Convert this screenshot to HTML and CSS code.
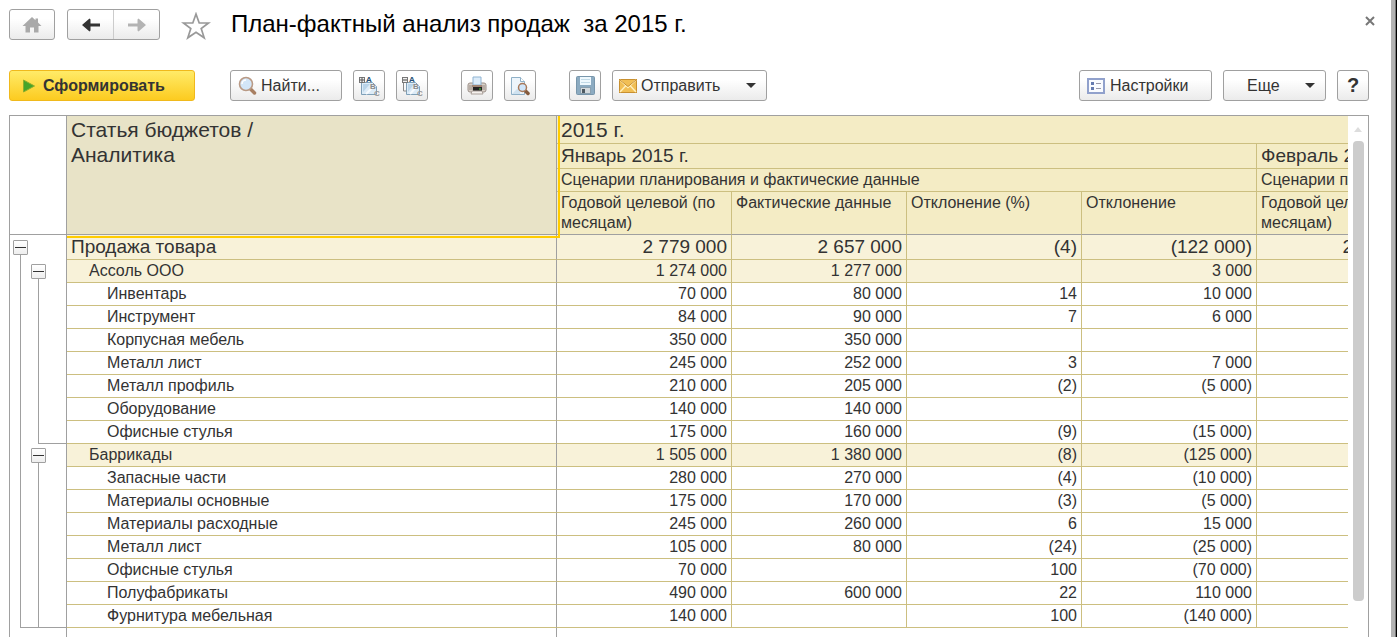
FILE: index.html
```html
<!DOCTYPE html>
<html lang="ru">
<head>
<meta charset="utf-8">
<title>План-фактный анализ продаж за 2015 г.</title>
<link rel="stylesheet" href="styles.css">
</head>
<body>
<div class="window">
  <header class="titlebar">
    <button class="btn home" aria-label="Начальная страница" disabled>
      <svg width="20" height="18" viewBox="0 0 20 18"><path d="M10 1 0.500 10H3.500V16.500H8v-5h4v5h4.500V10H19.500L16 6.600V2.500h-2.500v1.800z" fill="#a9a9a9"/></svg>
    </button>
    <div class="nav">
      <button class="nav-btn" aria-label="Назад"><svg width="18" height="14" viewBox="0 0 18 14"><path d="M0 7 7.500 0.500 8.500 1.500V5.500H18v3H8.500v4l-1 1z" fill="#333"/></svg></button>
      <button class="nav-btn" aria-label="Вперед" disabled><svg width="18" height="14" viewBox="0 0 18 14"><path d="M18 7 10.500 0.500 9.500 1.500V5.500H0v3h9.500v4l1 1z" fill="#b3b3b3"/></svg></button>
    </div>
    <button class="star" aria-label="В избранное"><svg width="30" height="28" viewBox="0 0 30 28"><path d="M15 2 18.200 11H27.500L20.200 16.500 23.200 25.800 15 20.200 6.800 25.800 9.800 16.500 2.500 11H11.800z" fill="#fff" stroke="#999" stroke-width="1.700"/></svg></button>
    <h1>План-фактный анализ продаж&nbsp; за 2015 г.</h1>
    <button class="close" aria-label="Закрыть"><svg width="10" height="10" viewBox="0 0 10 10"><path d="M1 1l8 8M9 1 1 9" stroke="#777" stroke-width="2"/></svg></button>
  </header>

  <div class="toolbar">
    <button class="btn primary"><svg width="12" height="14" viewBox="0 0 12 14"><path d="M0.500 1v12L11.500 7z" fill="#47a52a" stroke="#8fae2c"/></svg>Сформировать</button>
    <button class="btn find"><svg width="19" height="19" viewBox="0 0 19 19"><path d="M12.500 13l4 4" stroke="#a87f62" stroke-width="3.500" stroke-linecap="round"/><circle cx="8" cy="8" r="6.500" fill="#d3e6f8" stroke="#b99a85" stroke-width="1.600"/><path d="M4 8a4 4 0 0 1 4-4" stroke="#fff" stroke-width="1.500" fill="none"/></svg>Найти...</button>
    <div class="pair">
      <button class="btn square" aria-label="Развернуть группы">
        <svg class="abc" width="22" height="22" viewBox="0 0 22 22"><path d="M3.500 7.500h11l4 4v8h-15z" fill="#dcebf7" stroke="#7fa0b8"/><path d="M5 9h7L5 17z" fill="#b9d4e9"/><path d="M8 19l9-9" stroke="#f7fbfe" stroke-width="2"/><rect x="1.500" y="2.500" width="5" height="5" fill="#f0f0f0" stroke="#777"/><path d="M4 2.500v5M1.500 5h5" stroke="#555"/><text class="a" x="8" y="7">A</text><text class="b" x="12" y="14">B</text><text class="c" x="16" y="21">C</text></svg>
      </button>
      <button class="btn square" aria-label="Свернуть группы">
        <svg class="abc" width="22" height="22" viewBox="0 0 22 22"><path d="M5.500 7.500h9l4 4v8h-13z" fill="#dcebf7" stroke="#7fa0b8"/><path d="M7 9h6l-6 8z" fill="#b9d4e9"/><path d="M9 19l8-9" stroke="#f7fbfe" stroke-width="2"/><path d="M2.500 8v8h3" fill="none" stroke="#888"/><rect x="1.500" y="2.500" width="5" height="5" fill="#f0f0f0" stroke="#777"/><path d="M2 5h4" stroke="#444"/><text class="a" x="8" y="7">A</text><text class="b" x="12" y="14">B</text><text class="c" x="16" y="21">C</text></svg>
      </button>
    </div>
    <div class="pair">
      <button class="btn square" aria-label="Печать"><svg width="20" height="20" viewBox="0 0 20 20"><rect x="1" y="7" width="18" height="9" rx="2" fill="#d9d0c8" stroke="#9b9089"/><path d="M2 9h4v5H2zM15 9h3v5h-3z" fill="#b8ada5"/><path d="M6 1h8v8H6z" fill="#dcecfa" stroke="#90b4d2"/><rect x="5" y="9" width="10" height="2" fill="#a08473"/><rect x="6" y="11" width="9" height="4" fill="#222"/><path d="M12 13h2" stroke="#4bd13a"/><path d="M5 15h10l1 3H4z" fill="#f5f1ee" stroke="#aaa09a"/></svg></button>
      <button class="btn square" aria-label="Предварительный просмотр"><svg width="20" height="20" viewBox="0 0 20 20"><path d="M1.500 1.500h9l4 4v13h-13z" fill="#edf5fb" stroke="#8fb0c7"/><path d="M2 18h8V10z" fill="#cfe2f0"/><path d="M10.500 1.500v4h4" fill="#fff" stroke="#8fb0c7"/><path d="M15 14.500l3 3" stroke="#855b3d" stroke-width="3.500" stroke-linecap="round"/><circle cx="12.500" cy="11.500" r="4" fill="#cfe5fa" stroke="#a8795a" stroke-width="1.500"/></svg></button>
    </div>
    <div class="pair">
      <button class="btn square" aria-label="Сохранить"><svg width="19" height="19" viewBox="0 0 19 19"><rect x="0.500" y="0.500" width="18" height="18" rx="1" fill="#8cabc1" stroke="#7896ab"/><rect x="4" y="1" width="11" height="8" fill="#eef8fd"/><path d="M5 3.500h9M5 6.500h9" stroke="#c2dae7"/><rect x="4.500" y="11.500" width="10" height="6" fill="#d3d9dc" stroke="#8aa0af"/><rect x="6" y="13" width="3" height="4" fill="#4e5961"/></svg></button>
      <button class="btn send"><svg width="18" height="14" viewBox="0 0 18 14"><rect x="0.500" y="0.500" width="17" height="13" fill="#f1bf55" stroke="#c89030"/><path d="M1 1l8 7.500L17 1M1 13l6-6.500M17 13l-6-6.500" fill="none" stroke="#fff0bd" stroke-width="1.400"/><path d="M1 1l8 6.500L17 1" fill="none" stroke="#c98d2c"/></svg>Отправить<i class="caret"></i></button>
    </div>
    <div class="pair tools">
      <button class="btn settings"><svg width="18" height="16" viewBox="0 0 18 16"><rect x="1" y="1" width="16" height="14" fill="#f9fbff" stroke="#91a1cc" stroke-width="2"/><path d="M4 4h3v3H4zM4 9h3v3H4z" fill="#657bb0"/><path d="M9 5.500h5M9 10.500h5" stroke="#99a" /></svg>Настройки</button>
      <button class="btn more">Еще<i class="caret"></i></button>
      <button class="btn square help">?</button>
    </div>
  </div>

  <main class="report">
    <div class="sheet">
      <table>
        <colgroup><col class="c-tree"><col class="c-name"><col class="c-num"><col class="c-num"><col class="c-num"><col class="c-num"><col class="c-num"></colgroup>
        <thead>
          <tr class="h-year"><td class="corner" rowspan="4"></td><th class="selected" rowspan="4">Статья бюджетов /<br>Аналитика</th><th colspan="5">2015 г.</th></tr>
          <tr class="h-month"><th colspan="4">Январь 2015 г.</th><th>Февраль 2015 г.</th></tr>
          <tr class="h-scenario"><th colspan="4">Сценарии планирования и фактические данные</th><th>Сценарии планирования</th></tr>
          <tr class="h-kind"><th>Годовой целевой (по месяцам)</th><th>Фактические данные</th><th>Отклонение (%)</th><th>Отклонение</th><th>Годовой целевой (по месяцам)</th></tr>
        </thead>
        <tbody>
          <tr class="total"><td class="tree start1"><button class="toggle" aria-label="Свернуть"></button></td><th>Продажа товара</th><td>2 779 000</td><td>2 657 000</td><td>(4)</td><td>(122 000)</td><td>2 779 000</td></tr>
          <tr class="group"><td class="tree start2"><button class="toggle" aria-label="Свернуть"></button></td><th>Ассоль ООО</th><td>1 274 000</td><td>1 277 000</td><td></td><td>3 000</td><td></td></tr>
          <tr><td class="tree"></td><th>Инвентарь</th><td>70 000</td><td>80 000</td><td>14</td><td>10 000</td><td></td></tr>
          <tr><td class="tree"></td><th>Инструмент</th><td>84 000</td><td>90 000</td><td>7</td><td>6 000</td><td></td></tr>
          <tr><td class="tree"></td><th>Корпусная мебель</th><td>350 000</td><td>350 000</td><td></td><td></td><td></td></tr>
          <tr><td class="tree"></td><th>Металл лист</th><td>245 000</td><td>252 000</td><td>3</td><td>7 000</td><td></td></tr>
          <tr><td class="tree"></td><th>Металл профиль</th><td>210 000</td><td>205 000</td><td>(2)</td><td>(5 000)</td><td></td></tr>
          <tr><td class="tree"></td><th>Оборудование</th><td>140 000</td><td>140 000</td><td></td><td></td><td></td></tr>
          <tr><td class="tree end2"></td><th>Офисные стулья</th><td>175 000</td><td>160 000</td><td>(9)</td><td>(15 000)</td><td></td></tr>
          <tr class="group"><td class="tree start2"><button class="toggle" aria-label="Свернуть"></button></td><th>Баррикады</th><td>1 505 000</td><td>1 380 000</td><td>(8)</td><td>(125 000)</td><td></td></tr>
          <tr><td class="tree"></td><th>Запасные части</th><td>280 000</td><td>270 000</td><td>(4)</td><td>(10 000)</td><td></td></tr>
          <tr><td class="tree"></td><th>Материалы основные</th><td>175 000</td><td>170 000</td><td>(3)</td><td>(5 000)</td><td></td></tr>
          <tr><td class="tree"></td><th>Материалы расходные</th><td>245 000</td><td>260 000</td><td>6</td><td>15 000</td><td></td></tr>
          <tr><td class="tree"></td><th>Металл лист</th><td>105 000</td><td>80 000</td><td>(24)</td><td>(25 000)</td><td></td></tr>
          <tr><td class="tree"></td><th>Офисные стулья</th><td>70 000</td><td></td><td>100</td><td>(70 000)</td><td></td></tr>
          <tr><td class="tree"></td><th>Полуфабрикаты</th><td>490 000</td><td>600 000</td><td>22</td><td>110 000</td><td></td></tr>
          <tr><td class="tree end1"></td><th>Фурнитура мебельная</th><td>140 000</td><td></td><td>100</td><td>(140 000)</td><td></td></tr>
          <tr class="blank"><td class="tree-blank"></td><th></th><td colspan="5"></td></tr>
        </tbody>
      </table>
    </div>
    <div class="scroll"><svg width="8" height="5" viewBox="0 0 8 5"><path d="M4 0l4 5H0z" fill="#ddd"/></svg><div class="thumb"></div></div>
  </main>
</div>
</body>
</html>
```
FILE: styles.css
```css
:root {
  --line: #a0a0a0;
  --tan: #ccbf80;
}

* { box-sizing: border-box; }

body {
  margin: 0;
  font-family: "Liberation Sans", Arial, sans-serif;
  font-size: 16px;
  color: #333;
  background: #fff;
}

.window {
  display: flex;
  flex-direction: column;
  height: 100vh;
  overflow: hidden;
  padding: 9px 27px 0 9px;
  border-right: 1px solid #000;
  box-shadow: inset -1px 0 #777, inset -5px 0 #b3b3b3;
}

button {
  font: inherit;
  color: inherit;
  padding: 0;
  border: 0;
  background: none;
}

svg { display: block; flex: none; }

.titlebar { display: flex; align-items: center; height: 31px; }

.btn, .nav {
  display: flex;
  align-items: center;
  height: 31px;
  border: 1px solid #a0a0a0;
  border-radius: 3px;
  background: linear-gradient(#fff 30%, #ebebeb);
}

.home { width: 46px; justify-content: center; margin-right: 12px; }

.nav { width: 93px; }

.nav-btn {
  display: flex;
  flex: 1;
  height: 100%;
  align-items: center;
  justify-content: center;
}

.nav-btn + .nav-btn { border-left: 1px solid #ccc; }

.star { margin: 2px 20px 0 21px; }

h1 { margin: 0 0 2px; font-size: 24px; font-weight: 400; line-height: 30px; color: #000; white-space: pre; }

.close { margin: -8px -6px 0 auto; }

.toolbar { display: flex; height: 31px; margin-top: 30px; flex: none; }

.primary {
  width: 186px;
  padding-left: 13px;
  gap: 8px;
  font-weight: 700;
  border-color: #f0b91c;
  background: linear-gradient(#ffeb68, #fccb20);
}

.find { width: 112px; margin: 0 11px 0 35px; padding-left: 7px; gap: 4px; }

.pair { display: flex; gap: 11px; margin-right: 33px; }

.square { width: 32px; justify-content: center; }

.abc { font-size: 8px; font-weight: 700; }
.abc .a { fill: #234f73; }
.abc .b { fill: #8a8a8a; }
.abc .c { fill: #999; }

.send { width: 155px; padding: 0 10px 0 6px; gap: 4px; }

.caret {
  margin-left: auto;
  border: 5px solid transparent;
  border-top-color: #333;
  border-bottom-width: 0;
}

.tools { margin: 0 0 0 auto; }

.settings { width: 133px; padding-left: 7px; gap: 5px; }

.more { width: 103px; padding: 0 10px 0 23px; }

.help { font-size: 20px; font-weight: 700; }

.report {
  display: flex;
  flex: 1;
  min-height: 0;
  margin-top: 14px;
  border: 1px solid var(--line);
  border-bottom: 0;
}

.sheet { flex: 1; min-width: 0; overflow: hidden; }

table { width: 1422px; table-layout: fixed; border-collapse: separate; border-spacing: 0; }

.c-tree { width: 57px; }
.c-name { width: 490px; }
.c-num { width: 175px; }

td, th {
  height: 23px;
  padding: 0 4px;
  font-weight: 400;
  line-height: 20px;
  text-align: right;
  white-space: nowrap;
  overflow: hidden;
  border-right: 1px solid var(--tan);
  border-bottom: 1px solid var(--tan);
}

th { text-align: left; }

thead th { background: #f4ecc5; vertical-align: top; }

.h-year th { height: 28px; font-size: 21px; line-height: 27px; }
.h-month th { height: 25px; font-size: 19px; line-height: 24px; }
.h-scenario th { height: 23px; line-height: 22px; }
.h-kind th { height: 43px; padding-top: 1px; white-space: normal; border-bottom-color: var(--line); }

.h-year .selected {
  position: relative;
  overflow: visible;
  padding-top: 1px;
  line-height: 25px;
  background: #e8e3c7;
  border-color: var(--line);
}

/* Frame of the selected cell, drawn over the neighbouring cells */
.selected::after {
  content: "";
  position: absolute;
  inset: 0 -4px -4px 0;
  border: solid #fc0;
  border-width: 0 2px 2px 0;
}

.corner, .tree, .tree-blank { padding: 0 3px; text-align: left; border-color: var(--line); }

.tree {
  border-bottom: 0;
  background:
    linear-gradient(var(--line), var(--line)) 10px 0 / 1px 100% no-repeat,
    linear-gradient(var(--line), var(--line)) 28px 0 / 1px 100% no-repeat;
}

.start1 { background: linear-gradient(transparent 50%, var(--line) 50%) 10px 0 / 1px 100% no-repeat; }

.start2 {
  padding-left: 21px;
  background:
    linear-gradient(var(--line), var(--line)) 10px 0 / 1px 100% no-repeat,
    linear-gradient(transparent 50%, var(--line) 50%) 28px 0 / 1px 100% no-repeat;
}

.end2 {
  background:
    linear-gradient(var(--line), var(--line)) 10px 0 / 1px 100% no-repeat,
    linear-gradient(var(--line), var(--line)) 28px 0 / 1px 100% no-repeat,
    linear-gradient(var(--line), var(--line)) 28px 100% / 28px 1px no-repeat;
}

.end1 {
  background:
    linear-gradient(var(--line), var(--line)) 10px 0 / 1px 100% no-repeat,
    linear-gradient(var(--line), var(--line)) 28px 0 / 1px 100% no-repeat,
    linear-gradient(var(--line), var(--line)) 10px 100% / 46px 1px no-repeat;
}

.toggle {
  display: block;
  width: 15px;
  height: 15px;
  border: 1px solid #a0a0a0;
  border-radius: 1px;
  background:
    linear-gradient(#333, #333) center / 11px 1px no-repeat,
    linear-gradient(#fff, #eee);
}

tbody th { padding-left: 40px; border-right-color: var(--line); }

.group th { padding-left: 22px; }

.total th, .total td:not(.tree), .group th, .group td:not(.tree) { background-color: #f8f2d9; }

.total td, .total th { height: 25px; font-size: 19px; line-height: 24px; }

.total th { padding-left: 4px; }

.blank td, .blank th { height: 40px; border-bottom: 0; }

.blank td:last-child { border-right: 0; }

.scroll {
  display: flex;
  flex-direction: column;
  align-items: center;
  width: 20px;
  padding-top: 11px;
  gap: 9px;
}

.thumb { width: 11px; height: 460px; border-radius: 4px; background: #ccc; }
```
